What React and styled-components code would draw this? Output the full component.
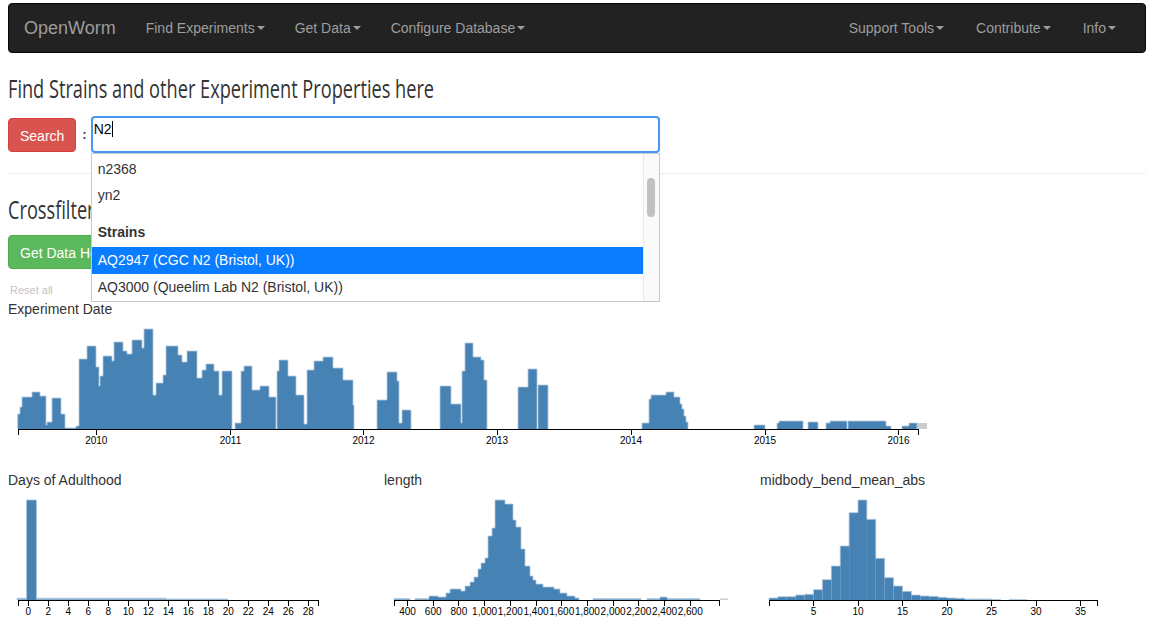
import styled, { createGlobalStyle } from "styled-components";

const GlobalStyle = createGlobalStyle`
    html, body {
        margin: 0;
        padding: 0;
        background: #fff;
    }
    body {
        font-family: "Liberation Sans", Arial, sans-serif;
        font-size: 14px;
        color: #333;
    }
`;

const Page = styled.div`
    padding: 3px 7px 0 8px;
`;

const Navbar = styled.nav`
    height: 50px;
    background: #222;
    border: 1px solid #080808;
    border-radius: 4px;
    display: flex;
    align-items: center;
    justify-content: space-between;
    padding: 0 13px 0 0;
    box-sizing: border-box;
`;

const NavGroup = styled.div`
    display: flex;
    align-items: center;
`;

const Brand = styled.span`
    font-size: 18px;
    color: #9d9d9d;
    padding: 0 15px;
    line-height: 20px;
`;

const NavLink = styled.span`
    color: #9d9d9d;
    padding: 0 ${(p) => p.$pad || 15}px;
    line-height: 20px;
    display: flex;
    align-items: center;
`;

const Caret = styled.span`
    display: inline-block;
    width: 0;
    height: 0;
    margin-left: 2px;
    border-top: 4px solid #9d9d9d;
    border-left: 4px solid transparent;
    border-right: 4px solid transparent;
`;

// the page uses a narrow display face; squeeze Open Sans to the same measure
const Heading = styled.h3`
    margin: ${(p) => p.$top}px 0 0;
    font-family: "Open Sans", "Liberation Sans", sans-serif;
    font-weight: 400;
    font-size: 26px;
    line-height: 31px;
    color: #333;
    white-space: nowrap;
    transform: scaleX(0.699);
    transform-origin: left center;
`;

const SearchRow = styled.div`
    margin-top: 12px;
    display: flex;
    align-items: center;
`;

const Button = styled.span`
    display: inline-block;
    height: 34px;
    line-height: 20px;
    padding: 7px 11px;
    box-sizing: border-box;
    border-radius: 4px;
    color: #fff;
    font-size: 14px;
    background: ${(p) => (p.$variant === "success" ? "#5cb85c" : "#d9534f")};
    border: 1px solid ${(p) => (p.$variant === "success" ? "#4cae4c" : "#d43f3a")};
    white-space: nowrap;
`;

const Colon = styled.span`
    margin: 0 4px 0 6px;
    font-weight: bold;
    font-size: 13px;
`;

const SearchBox = styled.div`
    position: relative;
    width: 569px;
`;

const Input = styled.div`
    height: 37px;
    box-sizing: border-box;
    border: 2px solid #4a97f0;
    border-radius: 4px;
    padding: 2px 1px;
    font-size: 14px;
    line-height: 18px;
    color: #000;
`;

const TextCursor = styled.span`
    display: inline-block;
    width: 1px;
    height: 16px;
    background: #000;
    vertical-align: -3px;
`;

const Suggestions = styled.div`
    position: absolute;
    left: 0;
    right: 0;
    top: 37px;
    height: 149px;
    box-sizing: border-box;
    background: #fff;
    border: 1px solid #c8c8c8;
    overflow: hidden;
    z-index: 5;
    padding: 2px 15px 0 0;
`;

const Suggestion = styled.div`
    height: ${(p) => (p.$active ? 27 : 26)}px;
    line-height: ${(p) => (p.$active ? 27 : 26)}px;
    padding-left: 6px;
    font-size: 14px;
    font-weight: ${(p) => (p.$group ? 700 : 400)};
    color: ${(p) => (p.$active ? "#fff" : "#333")};
    background: ${(p) => (p.$active ? "#0a7cff" : "transparent")};
    margin-top: ${(p) => p.$gap || 0}px;
    white-space: nowrap;
`;

const ScrollTrack = styled.div`
    position: absolute;
    top: 0;
    right: 0;
    bottom: 0;
    width: 15px;
    background: #fafafa;
    border-left: 1px solid #e8e8e8;
`;

const ScrollThumb = styled.div`
    position: absolute;
    top: 24px;
    left: 3px;
    width: 8px;
    height: 39px;
    border-radius: 4px;
    background: #c1c1c1;
`;

const Divider = styled.hr`
    margin: 20px 0 0;
    border: 0;
    border-top: 1px solid #eee;
`;

const ButtonRow = styled.div`
    margin-top: 10px;
`;

const ResetLink = styled.div`
    margin-top: 14px;
    margin-left: 2px;
    font-size: 11px;
    line-height: 14px;
    color: #c4c4c4;
`;

const ChartLabel = styled.div`
    font-size: 14px;
    line-height: 20px;
    color: #333;
    margin-top: ${(p) => p.$top || 0}px;
`;

const ChartRow = styled.div`
    margin-top: 21px;
    display: grid;
    grid-template-columns: 376px 376px 376px;
`;

const ChartBox = styled.div`
    display: flex;
    flex-direction: column;
`;

const Svg = styled.svg`
    display: block;
    overflow: visible;
`;

const BLUE = "#4682b4";

// date chart bars: [x0, x1, top] in page pixels
const dateTops = [
    [17.7, 20, 415], [20, 22, 408], [22, 32, 398], [32, 40, 393], [40, 46, 397],
    [46, 47, 426], [47, 52, 423], [52, 61, 399], [61, 65, 415], [65, 76, 429],
    [76, 79, 427], [79, 87, 360], [87, 96, 347], [96, 99, 368], [99, 100, 387],
    [100, 103, 377], [103, 112, 357], [112, 114, 362], [114, 123, 343], [123, 127, 352],
    [127, 132, 355], [132, 142, 341], [142, 144, 349], [144, 153, 330], [153, 156, 396],
    [156, 163, 384], [163, 166, 376], [166, 178, 347], [178, 182, 356], [182, 187, 363],
    [187, 197, 352], [197, 202, 379], [202, 206, 371], [206, 214, 365], [214, 219, 372],
    [219, 222, 396], [222, 232, 372],
    [235, 241, 424], [241, 244, 372], [244, 252, 367], [252, 260, 391], [260, 269, 387],
    [269, 276, 398],
    [277, 279, 372], [279, 288, 361], [288, 296, 377], [296, 304, 396], [304, 307, 425],
    [307, 314, 371], [314, 323, 362], [323, 333, 358], [333, 343, 369], [343, 353, 381],
    [353, 354, 406],
    [377, 387, 401], [387, 397, 373], [397, 399, 382], [399, 402, 424], [402, 411, 411],
    [440, 451, 387], [451, 461, 405], [461, 462, 424], [462, 465, 372], [465, 473, 344],
    [473, 481, 358], [481, 484, 361], [484, 487, 381],
    [518, 528, 388], [528, 537, 370], [538, 548, 386],
    [642, 649, 424], [649, 651, 400], [651, 666, 396], [666, 674, 393], [674, 680, 398],
    [680, 682, 405], [682, 684, 410], [684, 686, 417], [686, 688, 423],
    [754, 765, 426], [777, 779, 424], [779, 793, 422], [793, 803, 422], [808, 818, 423],
    [826, 830, 424], [830, 847, 422], [848, 868, 422], [868, 886, 422], [886, 891, 427],
    [902, 909, 427], [909, 917, 424],
];
const dateBars = dateTops.map(([a, b, t]) => [a, b, 430 - t]);
dateBars.push([917, 927, 6, "off"]);

const yearTicks = [
    [96.3, "2010"], [230.5, "2011"], [363.5, "2012"], [497, "2013"],
    [631, "2014"], [765, "2015"], [898.5, "2016"],
];

const dayBars = [
    [17, 26.5, 1.8, "faint"], [26.5, 36.5, 100], [36.5, 166, 1.8, "faint"],
    [166, 228, 1, "faint"],
];
const dayTicks = Array.from({ length: 15 }, (_, i) => [28.3 + 20 * i, String(i * 2)]);

const lengthBars = [
    [394, 410, 1.5, "faint"], [415, 429, 1.5, "faint"], [429, 438, 4], [438, 446, 3],
    [446, 450, 7], [450, 461, 11], [461, 465, 9], [465, 470, 14], [470, 474, 18],
    [474, 478, 23], [478, 481, 31], [481, 485, 37], [485, 488, 42], [488, 492, 64],
    [492, 495, 72], [495, 505, 100], [505, 513, 96], [513, 516, 80], [516, 521, 73],
    [521, 525, 51], [525, 530, 34], [530, 533, 24], [533, 536, 20], [536, 543, 16],
    [543, 554, 13], [554, 560, 11], [560, 567, 7], [567, 575, 4], [575, 579, 2],
    [593, 641, 1.5, "faint"], [647, 660, 1.5, "faint"], [660, 667, 3],
    [667, 700, 1.5, "faint"], [720, 728, 1.5, "off"],
];
const lengthLabels = ["400", "600", "800", "1,000", "1,200", "1,400", "1,600",
    "1,800", "2,000", "2,200", "2,400", "2,600"];
const lengthTicks = lengthLabels.map((l, i) => [407.5 + 25.7 * i, l]);

const bendHeights = [2, 3.3, 3.3, 5, 5.7, 10.3, 20.3, 34, 54, 87.3, 100, 80.7, 41.7,
    22.3, 14, 8.7, 5, 4, 3.7, 2.7, 2, 1.7, 1, 1, 1, 0.6, 0, 0.6, 0.4];
const bendBars = bendHeights
    .map((h, i) => [769 + 8.9 * i, 769 + 8.9 * (i + 1), h, h < 1.5 ? "faint" : undefined])
    .filter((b) => b[2] > 0);
const bendTicks = [5, 10, 15, 20, 25, 30, 35].map((v) => [769 + 8.9 * v, String(v)]);

const outline = (bars, base) => {
    let d = "";
    let prev = null;
    bars.filter((b) => b[3] !== "off").forEach(([x0, x1, h]) => {
        const top = base - h;
        if (prev && Math.abs(x0 - prev) < 0.6) {
            d += ` L${x0},${top} L${x1},${top}`;
        } else {
            if (prev) d += ` L${prev},${base}`;
            d += ` M${x0},${base} L${x0},${top} L${x1},${top}`;
        }
        prev = x1;
    });
    if (prev) d += ` L${prev},${base}`;
    return d;
};

const barFill = (tone) => (tone === "off" ? "#ccc" : BLUE);
const barOpacity = (tone) => (tone === "faint" ? 0.65 : 1);

const Histogram = ({ left, top, width, height, base, bars, ticks, axis }) => (
    <Svg width={width} height={height} viewBox={`${left} ${top} ${width} ${height}`}>
        {bars.map(([x0, x1, h, tone], i) => (
            <rect
                key={i}
                x={x0}
                y={base - h}
                width={x1 - x0}
                height={h}
                fill={barFill(tone)}
                fillOpacity={barOpacity(tone)}
            />
        ))}
        <path d={outline(bars, base)} fill="none" stroke="#b3c8dc" strokeWidth="0.8" />
        <g stroke="#000" strokeWidth="1" shapeRendering="crispEdges">
            <line x1={axis[0]} x2={axis[1]} y1={base + 0.5} y2={base + 0.5} />
            <line x1={axis[0] + 0.5} x2={axis[0] + 0.5} y1={base} y2={base + 6} />
            <line x1={axis[1] - 0.5} x2={axis[1] - 0.5} y1={base} y2={base + 6} />
            {ticks.map(([x], i) => (
                <line key={i} x1={x} x2={x} y1={base} y2={base + 6} />
            ))}
        </g>
        <g fontFamily="Liberation Sans, Arial, sans-serif" fontSize="10" fill="#000" textAnchor="middle">
            {ticks.map(([x, label], i) => (
                <text key={i} x={x} y={base + 15}>
                    {label}
                </text>
            ))}
        </g>
    </Svg>
);

const leftLinks = ["Find Experiments", "Get Data", "Configure Database"];
const rightLinks = ["Support Tools", "Contribute", "Info"];

const App = () => {
    return (
        <Page>
            <GlobalStyle />
            <Navbar>
                <NavGroup>
                    <Brand>OpenWorm</Brand>
                    {leftLinks.map((l) => (
                        <NavLink key={l}>
                            {l}
                            <Caret />
                        </NavLink>
                    ))}
                </NavGroup>
                <NavGroup>
                    {rightLinks.map((l) => (
                        <NavLink key={l} $pad={16}>
                            {l}
                            <Caret />
                        </NavLink>
                    ))}
                </NavGroup>
            </Navbar>

            <Heading $top={20}>Find Strains and other Experiment Properties here</Heading>
            <SearchRow>
                <Button>Search</Button>
                <Colon>:</Colon>
                <SearchBox>
                    <Input>
                        N2
                        <TextCursor />
                    </Input>
                    <Suggestions>
                        <Suggestion>n2368</Suggestion>
                        <Suggestion>yn2</Suggestion>
                        <Suggestion $group $gap={11}>
                            Strains
                        </Suggestion>
                        <Suggestion $active $gap={2}>
                            AQ2947 (CGC N2 (Bristol, UK))
                        </Suggestion>
                        <Suggestion>AQ3000 (Queelim Lab N2 (Bristol, UK))</Suggestion>
                        <ScrollTrack>
                            <ScrollThumb />
                        </ScrollTrack>
                    </Suggestions>
                </SearchBox>
            </SearchRow>

            <Divider />
            <Heading $top={20}>Crossfilter Summary</Heading>
            <ButtonRow>
                <Button $variant="success">Get Data Here</Button>
            </ButtonRow>
            <ResetLink>Reset all</ResetLink>
            <ChartLabel $top={2}>Experiment Date</ChartLabel>
            <Histogram
                left={8}
                top={320}
                width={940}
                height={130}
                base={430}
                bars={dateBars}
                ticks={yearTicks}
                axis={[18, 919]}
            />

            <ChartRow>
                <ChartBox>
                    <ChartLabel>Days of Adulthood</ChartLabel>
                    <Histogram
                        left={8}
                        top={491}
                        width={370}
                        height={134}
                        base={601}
                        bars={dayBars}
                        ticks={dayTicks}
                        axis={[18, 319]}
                    />
                </ChartBox>
                <ChartBox>
                    <ChartLabel>length</ChartLabel>
                    <Histogram
                        left={384}
                        top={491}
                        width={370}
                        height={134}
                        base={601}
                        bars={lengthBars}
                        ticks={lengthTicks}
                        axis={[394, 720]}
                    />
                </ChartBox>
                <ChartBox>
                    <ChartLabel>midbody_bend_mean_abs</ChartLabel>
                    <Histogram
                        left={760}
                        top={491}
                        width={376}
                        height={134}
                        base={601}
                        bars={bendBars}
                        ticks={bendTicks}
                        axis={[769, 1098]}
                    />
                </ChartBox>
            </ChartRow>
        </Page>
    );
};

export default App;
